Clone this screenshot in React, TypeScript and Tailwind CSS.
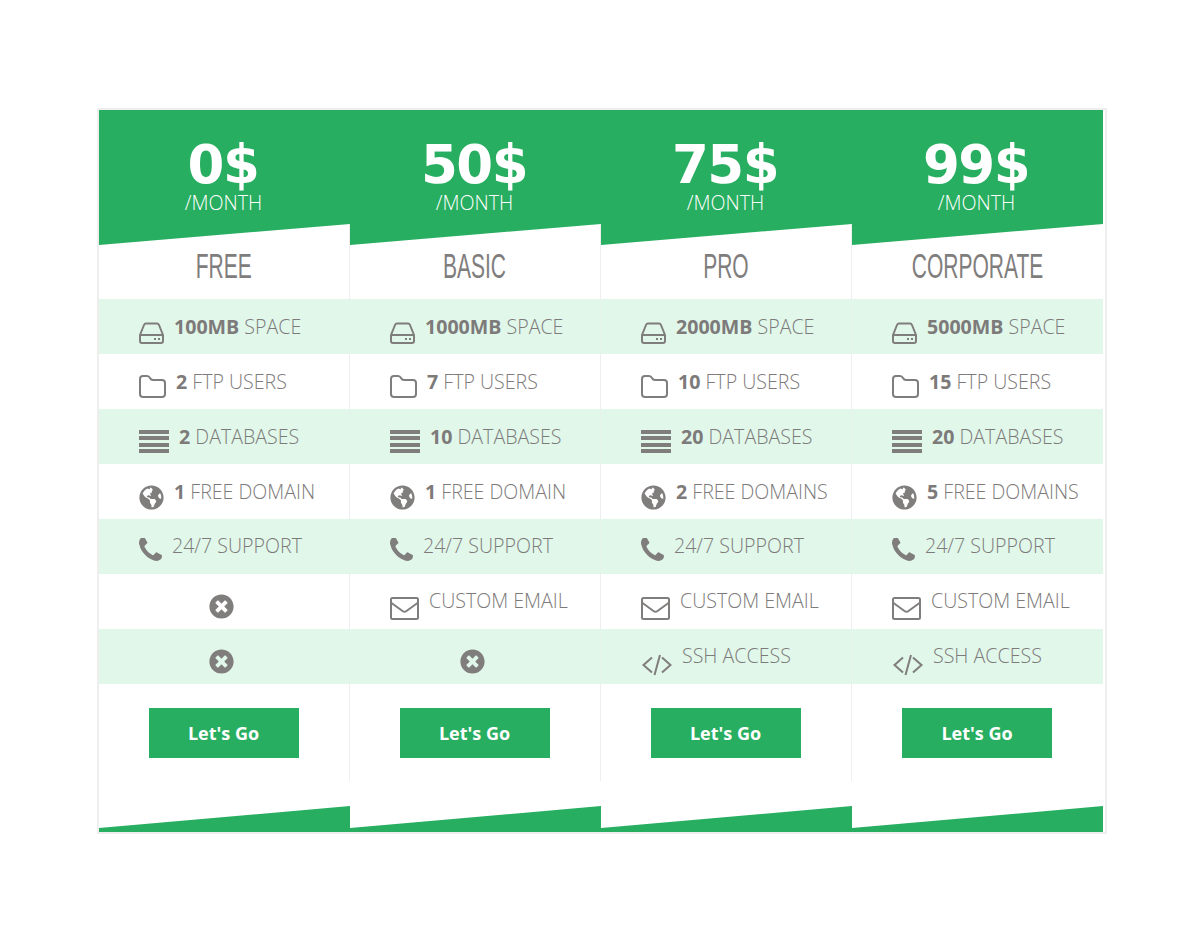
import React from "react";
import { FaGlobeAmericas, FaTimesCircle } from "react-icons/fa";

type Feature = { icon: string; bold?: string; text: string } | null;

const HddIcon = () => (
  <svg width="25" height="22" viewBox="0 0 25 22" fill="none" stroke="#807d7d" strokeWidth="2" className="mt-[12px] shrink-0">
    <path d="M1 13 L5 3 Q5.6 1.5 7 1.5 H18 Q19.4 1.5 20 3 L24 13 V19 Q24 21 22 21 H3 Q1 21 1 19 Z" strokeLinejoin="round" />
    <path d="M1 13 H24" />
    <rect x="15" y="16" width="2" height="2" fill="#807d7d" stroke="none" />
    <rect x="19" y="16" width="2" height="2" fill="#807d7d" stroke="none" />
  </svg>
);

const FolderIcon = () => (
  <svg width="27" height="23" viewBox="0 0 27 23" fill="none" stroke="#807d7d" strokeWidth="2" className="mt-[10px] shrink-0">
    <path d="M1 4 Q1 1 4 1 H8 Q10 1 11 3 Q12 5 14 5 H23 Q26 5 26 8 V19 Q26 22 23 22 H4 Q1 22 1 19 Z" strokeLinejoin="round" />
  </svg>
);

const BarsIcon = () => (
  <svg width="30" height="23" viewBox="0 0 30 23" fill="#807d7d" className="mt-[10px] shrink-0">
    <rect x="0" y="0" width="30" height="4" />
    <rect x="0" y="6" width="30" height="4" />
    <rect x="0" y="13" width="30" height="4" />
    <rect x="0" y="19" width="30" height="4" />
  </svg>
);

const PhoneIcon = () => (
  <svg width="23" height="24" viewBox="192 192 1408 1408" preserveAspectRatio="none" fill="#807d7d" className="mt-[7px] shrink-0">
    <path d="M1600 1240q0 27-10 70.5t-21 68.5q-21 50-122 106-94 51-186 51-27 0-53-3.5t-57.5-12.5-47-14.5-55.5-20.5-49-18q-98-35-175-83-127-79-264-216t-216-264q-48-77-83-175-3-9-18-49t-20.5-55.5-14.5-47-12.5-57.5-3.5-53q0-92 51-186 56-101 106-122 25-11 68.5-21t70.5-10q14 0 21 3 18 6 53 76 11 19 30 54t35 63.5 31 53.5q3 4 17.5 25t21.5 35.5 7 28.5q0 20-28.5 50t-62 55-62 53-28.5 46q0 9 5 22.5t8.5 20.5 14 24 11.5 19q76 137 174 235t235 174q2 1 19 11.5t24 14 20.5 8.5 22.5 5q18 0 46-28.5t53-62 55-62 50-28.5q14 0 28.5 7t35.5 21.5 25 17.5q25 15 53.5 31t63.5 35 54 30q70 35 76 53 3 7 3 21z" />
  </svg>
);

const MailIcon = () => (
  <svg width="29" height="23" viewBox="0 0 29 23" fill="none" stroke="#807d7d" strokeWidth="2" className="mt-[14px] shrink-0">
    <rect x="1" y="1" width="27" height="21" rx="1.5" />
    <path d="M1.5 6 L12.5 14 Q14.5 15.5 16.5 14 L27.5 6" />
  </svg>
);

const CodeIcon = () => (
  <svg width="31" height="22" viewBox="0 0 31 22" fill="none" stroke="#807d7d" strokeWidth="2" className="mt-[16px] shrink-0">
    <path d="M11 3.5 L2.5 11 L11 18.5" />
    <path d="M21 3.5 L29.5 11 L21 18.5" />
    <path d="M19 1 L13.5 21" />
  </svg>
);

const icons: Record<string, React.ReactNode> = {
  hdd: <HddIcon />,
  folder: <FolderIcon />,
  bars: <BarsIcon />,
  globe: <FaGlobeAmericas size={25} color="#807d7d" className="mt-[12px] shrink-0" />,
  phone: <PhoneIcon />,
  mail: <MailIcon />,
  code: <CodeIcon />,
};

const plans: { price: string; name: string; features: Feature[] }[] = [
  {
    price: "0$",
    name: "FREE",
    features: [
      { icon: "hdd", bold: "100MB", text: "SPACE" },
      { icon: "folder", bold: "2", text: "FTP USERS" },
      { icon: "bars", bold: "2", text: "DATABASES" },
      { icon: "globe", bold: "1", text: "FREE DOMAIN" },
      { icon: "phone", text: "24/7 SUPPORT" },
      null,
      null,
    ],
  },
  {
    price: "50$",
    name: "BASIC",
    features: [
      { icon: "hdd", bold: "1000MB", text: "SPACE" },
      { icon: "folder", bold: "7", text: "FTP USERS" },
      { icon: "bars", bold: "10", text: "DATABASES" },
      { icon: "globe", bold: "1", text: "FREE DOMAIN" },
      { icon: "phone", text: "24/7 SUPPORT" },
      { icon: "mail", text: "CUSTOM EMAIL" },
      null,
    ],
  },
  {
    price: "75$",
    name: "PRO",
    features: [
      { icon: "hdd", bold: "2000MB", text: "SPACE" },
      { icon: "folder", bold: "10", text: "FTP USERS" },
      { icon: "bars", bold: "20", text: "DATABASES" },
      { icon: "globe", bold: "2", text: "FREE DOMAINS" },
      { icon: "phone", text: "24/7 SUPPORT" },
      { icon: "mail", text: "CUSTOM EMAIL" },
      { icon: "code", text: "SSH ACCESS" },
    ],
  },
  {
    price: "99$",
    name: "CORPORATE",
    features: [
      { icon: "hdd", bold: "5000MB", text: "SPACE" },
      { icon: "folder", bold: "15", text: "FTP USERS" },
      { icon: "bars", bold: "20", text: "DATABASES" },
      { icon: "globe", bold: "5", text: "FREE DOMAINS" },
      { icon: "phone", text: "24/7 SUPPORT" },
      { icon: "mail", text: "CUSTOM EMAIL" },
      { icon: "code", text: "SSH ACCESS" },
    ],
  },
];

function FeatureRow({ feature, striped, last }: { feature: Feature; striped: boolean; last: boolean }) {
  const bg = striped ? "bg-[#e1f7ea]" : "bg-white";
  const divider = last ? "" : striped ? "border-r border-[#e6f3ec]" : "border-r border-[#eeeeee]";
  if (!feature) {
    return (
      <div className={`h-[55px] flex items-center justify-center pr-[5px] ${bg} ${divider}`}>
        <FaTimesCircle size={25} color="#807d7d" className="mt-[10px]" />
      </div>
    );
  }
  return (
    <div className={`h-[55px] flex items-center gap-[10px] pl-[40px] ${bg} ${divider}`}>
      {icons[feature.icon]}
      <span className={`text-[19.6px] font-light text-[#7d7a7a] whitespace-nowrap ${feature.bold ? "" : "mb-[2px]"}`}>
        {feature.bold && <b className="font-bold">{feature.bold} </b>}
        {feature.text}
      </span>
    </div>
  );
}

export default function App() {
  return (
    <div className="min-h-[942px] bg-white pt-[108px] pl-[97px] font-['Open_Sans',sans-serif]">
      <div className="w-[1010px] h-[726px] border-2 border-[#eeeeee] grid grid-cols-[repeat(4,251px)]">
        {plans.map((plan, idx) => {
          const last = idx === plans.length - 1;
          const divider = last ? "" : "border-r border-[#eeeeee]";
          return (
            <section key={plan.name} className="flex flex-col">
              {/* price header */}
              <div className="h-[114px] bg-[#27ae60] flex flex-col items-center text-white pt-[20px] pr-[2px]">
                <div className="font-['DejaVu_Sans',sans-serif] font-bold text-[53px] tracking-[-1.5px] leading-[70px] h-[60px] pr-[1px]">{plan.price}</div>
                <div className="text-[19.7px] font-light leading-[24px] mt-[1px]">/MONTH</div>
              </div>
              <svg width="251" height="21" viewBox="0 0 251 21" className="block">
                <polygon points="0,0 251,0 0,21" fill="#27ae60" />
                {!last && <line x1="250.5" y1="0" x2="250.5" y2="21" stroke="#eeeeee" />}
              </svg>

              <div className={`h-[54px] flex items-center justify-center pb-[12px] text-[#807d7d] ${divider}`}>
                <span className="inline-block scale-x-[0.6] text-[35px] leading-[40px] whitespace-nowrap font-['Liberation_Sans',sans-serif]">{plan.name}</span>
              </div>
              {plan.features.map((feature, i) => (
                <FeatureRow key={i} feature={feature} striped={i % 2 === 0} last={last} />
              ))}
              <div className={`pt-[24px] pb-[23px] flex justify-center pr-[1px] ${divider}`}>
                <button className="w-[150px] h-[50px] bg-[#27ae60] text-white font-bold text-[18px]">Let's Go</button>
              </div>

              {/* footer slant */}
              <div className="h-[25px]" />
              <svg width="251" height="22" viewBox="0 0 251 22" className="block">
                <polygon points="0,22 251,0 251,22" fill="#27ae60" />
              </svg>
              <div className="h-[4px] bg-[#27ae60]" />
            </section>
          );
        })}
      </div>
    </div>
  );
}
